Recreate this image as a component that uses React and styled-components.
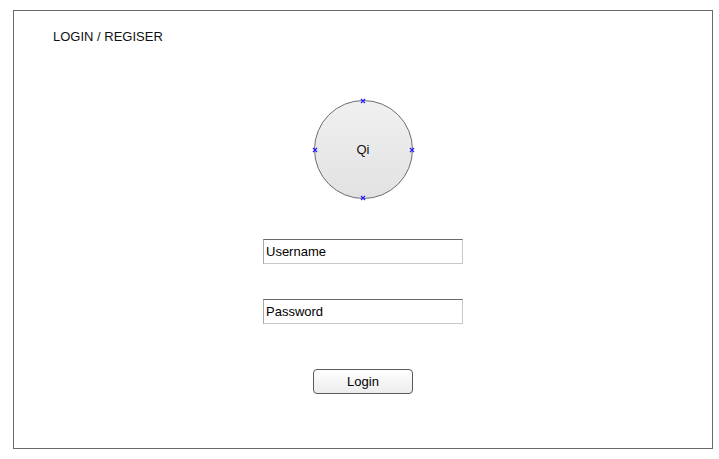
import React from "react";
import styled, { createGlobalStyle } from "styled-components";

const Global = createGlobalStyle`
    html, body {
        margin: 0;
        padding: 0;
        background: #ffffff;
        font-family: "Liberation Sans", Arial, sans-serif;
    }
`;

const Frame = styled.div`
    box-sizing: border-box;
    margin: 10px 0 0 13px;
    width: 700px;
    height: 439px;
    border: 1px solid #6a6a6a;
    background: #ffffff;
`;

const Title = styled.div`
    padding: 18px 0 0 39px;
    font-size: 13px;
    line-height: 15px;
    color: #111;
`;

const Form = styled.div`
    display: flex;
    flex-direction: column;
    align-items: center;
    padding-top: 56px;
`;

const Avatar = styled.div`
    position: relative;
    box-sizing: border-box;
    width: 99px;
    height: 99px;
    border: 1px solid #6e6e6e;
    border-radius: 50%;
    background: linear-gradient(to bottom, #f0f0f0, #e2e2e2);
    display: flex;
    align-items: center;
    justify-content: center;
    font-size: 13px;
    color: #111;
    margin-bottom: 40px;
`;

/* selection handles sitting on the circle outline */
const Handle = styled.svg`
    position: absolute;
    z-index: 1;
    width: 6px;
    height: 6px;
    left: ${(p) => p.$left};
    top: ${(p) => p.$top};
    transform: translate(-50%, -50%);
    overflow: visible;
`;

const Field = styled.div`
    box-sizing: border-box;
    width: 200px;
    height: 25px;
    margin-bottom: ${(p) => p.$gap}px;
    border: 1px solid #c8c8c8;
    border-top-color: #6a6a6a;
    border-left-color: #a8a8a8;
    padding: 0 0 0 2px;
    display: flex;
    align-items: center;
    font-size: 13px;
    color: #000;
    background: #fff;
`;

const Button = styled.button`
    box-sizing: border-box;
    width: 100px;
    height: 25px;
    border: 1px solid #5a5a5a;
    border-radius: 4px;
    background: linear-gradient(to bottom, #ffffff, #ececec);
    font-family: "Liberation Sans", Arial, sans-serif;
    font-size: 13px;
    color: #000;
    padding: 0;
    cursor: pointer;
`;

function Cross({ left, top }) {
    return (
        <Handle $left={left} $top={top} viewBox="0 0 6 6">
            <path d="M1 1 L5 5 M5 1 L1 5" stroke="#2020ff" strokeWidth="1.2" />
        </Handle>
    );
}

export default function App() {
    return (
        <>
            <Global />
            <Frame>
                <Title>LOGIN / REGISER</Title>
                <Form>
                    <Avatar>
                        Qi
                        <Cross left="50%" top="0%" />
                        <Cross left="50%" top="100%" />
                        <Cross left="0%" top="50%" />
                        <Cross left="100%" top="50%" />
                    </Avatar>
                    <Field $gap={35}>Username</Field>
                    <Field $gap={45}>Password</Field>
                    <Button>Login</Button>
                </Form>
            </Frame>
        </>
    );
}
